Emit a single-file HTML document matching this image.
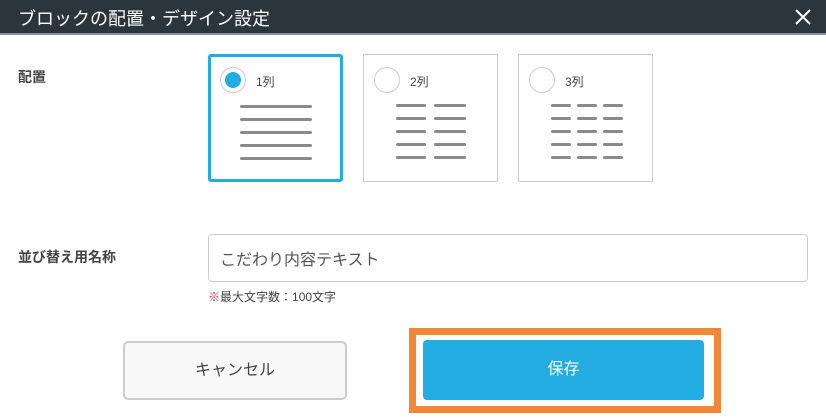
<!DOCTYPE html><html><head><meta charset="utf-8"><style>
body{margin:0;width:826px;height:418px;background:#fff;font-family:"Liberation Sans","Noto Sans CJK JP",sans-serif;position:relative;overflow:hidden;color:#444}
.a{position:absolute}
.hd{left:0;top:0;width:826px;height:33px;background:#2a353c;border-bottom:2px solid #8a9095}
.box{border:1px solid #ccc;background:#fff;box-sizing:border-box;width:135px;height:128px;top:54px}
.rad{width:26px;height:26px;border:1px solid #ccc;border-radius:50%;box-sizing:border-box;background:#fff}
.ln{height:3px;background:#8a8a8a;border-radius:2px}
.lb{font-size:12px;color:#444}
</style></head><body>
<div class="a hd"></div>
<div class="a" style="left:18px;top:5px;font-size:18px;color:#fff">ブロックの配置・デザイン設定</div>
<svg class="a" style="left:793px;top:7px" width="20" height="20"><path d="M3 3L17 17M17 3L3 17" stroke="#fff" stroke-width="2"/></svg>
<div class="a" style="left:18px;top:67px;font-size:14px;font-weight:bold;color:#444">配置</div>
<div class="a box" style="left:208px;border:3px solid #22ace2;border-radius:3px"></div>
<div class="a rad" style="left:220px;top:67px"></div>
<div class="a" style="left:225px;top:72px;width:16px;height:16px;border-radius:50%;background:#22ace2"></div>
<div class="a lb" style="left:256px;top:73px">1列</div>
<div class="a box" style="left:363px"></div>
<div class="a rad" style="left:374px;top:67px"></div>
<div class="a lb" style="left:410px;top:73px">2列</div>
<div class="a box" style="left:518px"></div>
<div class="a rad" style="left:529px;top:67px"></div>
<div class="a lb" style="left:565px;top:73px">3列</div>
<div class="a" style="left:240px;top:105px">
<div class="ln" style="width:72px"></div><div class="ln" style="width:72px;margin-top:10px"></div><div class="ln" style="width:72px;margin-top:10px"></div><div class="ln" style="width:72px;margin-top:10px"></div><div class="ln" style="width:72px;margin-top:10px"></div></div>
<div class="a" style="left:396px;top:104px"><div class="ln" style="width:30px"></div><div class="ln" style="width:30px;margin-top:10px"></div><div class="ln" style="width:30px;margin-top:10px"></div><div class="ln" style="width:30px;margin-top:10px"></div><div class="ln" style="width:30px;margin-top:10px"></div></div>
<div class="a" style="left:434px;top:104px"><div class="ln" style="width:32px"></div><div class="ln" style="width:32px;margin-top:10px"></div><div class="ln" style="width:32px;margin-top:10px"></div><div class="ln" style="width:32px;margin-top:10px"></div><div class="ln" style="width:32px;margin-top:10px"></div></div>
<div class="a" style="left:551px;top:104px"><div class="ln" style="width:20px"></div><div class="ln" style="width:20px;margin-top:10px"></div><div class="ln" style="width:20px;margin-top:10px"></div><div class="ln" style="width:20px;margin-top:10px"></div><div class="ln" style="width:20px;margin-top:10px"></div></div>
<div class="a" style="left:577px;top:104px"><div class="ln" style="width:20px"></div><div class="ln" style="width:20px;margin-top:10px"></div><div class="ln" style="width:20px;margin-top:10px"></div><div class="ln" style="width:20px;margin-top:10px"></div><div class="ln" style="width:20px;margin-top:10px"></div></div>
<div class="a" style="left:603px;top:104px"><div class="ln" style="width:20px"></div><div class="ln" style="width:20px;margin-top:10px"></div><div class="ln" style="width:20px;margin-top:10px"></div><div class="ln" style="width:20px;margin-top:10px"></div><div class="ln" style="width:20px;margin-top:10px"></div></div>
<div class="a" style="left:18px;top:247px;font-size:14px;font-weight:bold;color:#444">並び替え用名称</div>
<div class="a" style="left:208px;top:234px;width:600px;height:48px;border:1px solid #ccc;border-radius:4px;box-sizing:border-box"></div>
<div class="a" style="left:220px;top:246px;font-size:16px;color:#555">こだわり内容テキスト</div>
<div class="a" style="left:208px;top:288px;font-size:12px;color:#444"><span style="color:#e33">※</span>最大文字数：100文字</div>
<div class="a" style="left:123px;top:341px;width:224px;height:59px;box-sizing:border-box;border:2px solid #ccc;border-radius:5px;background:#f8f8f8;text-align:center;line-height:55px;font-size:16px;color:#444">キャンセル</div>
<div class="a" style="left:409px;top:328px;width:312px;height:85px;box-sizing:border-box;border:7px solid #f08838"></div>
<div class="a" style="left:423px;top:340px;width:281px;height:60px;background:#22ace2;border-radius:4px;text-align:center;line-height:60px;font-size:16px;color:#fff">保存</div>
</body></html>
